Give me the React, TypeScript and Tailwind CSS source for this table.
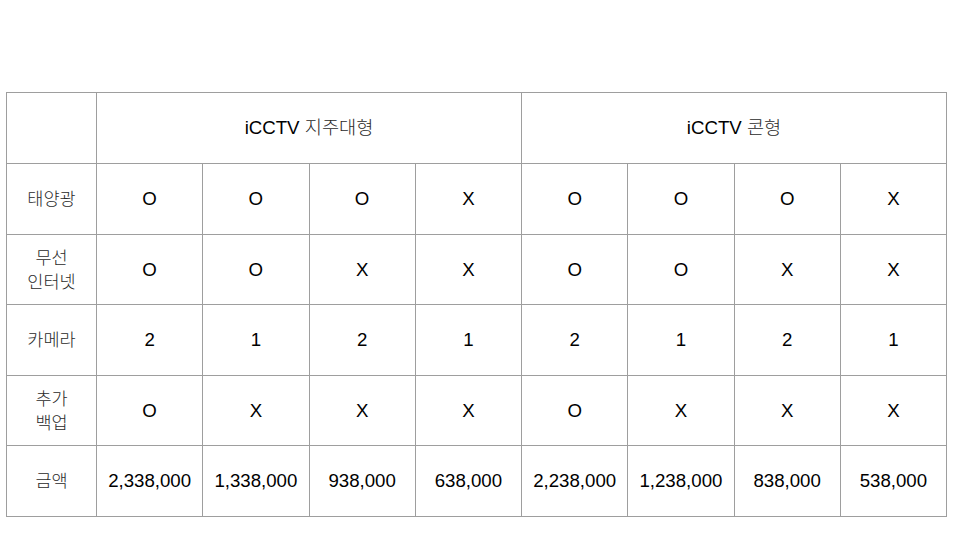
import React from 'react';

const rows: { label: string[]; values: string[] }[] = [
    { label: ['태양광'], values: ['O', 'O', 'O', 'X', 'O', 'O', 'O', 'X'] },
    { label: ['무선', '인터넷'], values: ['O', 'O', 'X', 'X', 'O', 'O', 'X', 'X'] },
    { label: ['카메라'], values: ['2', '1', '2', '1', '2', '1', '2', '1'] },
    { label: ['추가', '백업'], values: ['O', 'X', 'X', 'X', 'O', 'X', 'X', 'X'] },
    {
        label: ['금액'],
        values: ['2,338,000', '1,338,000', '938,000', '638,000', '2,238,000', '1,238,000', '838,000', '538,000'],
    },
];

const cell = 'border border-[#9e9e9e] text-center align-middle p-0';
// Korean glyphs are drawn thin and slightly gray in the reference
const ko = 'font-light text-[#2a2a2a]';

export default function App() {
    return (
        <div
            className="w-[960px] h-[540px] bg-white pt-[92px] pl-[6px] text-[18.67px] leading-[24px] text-black"
            style={{ fontFamily: '"Liberation Sans", "Noto Sans CJK KR", sans-serif' }}
        >
            <table className="border-collapse table-fixed w-[940px]">
                <colgroup>
                    <col className="w-[90px]" />
                    {Array.from({ length: 8 }).map((_, i) => (
                        <col key={i} className="w-[106.25px]" />
                    ))}
                </colgroup>
                <tbody>
                    <tr className="h-[71px]">
                        <td className={cell}></td>
                        <td className={cell} colSpan={4}>
                            iCCTV <span className={ko}>지주대형</span>
                        </td>
                        <td className={cell} colSpan={4}>
                            iCCTV <span className={ko}>콘형</span>
                        </td>
                    </tr>
                    {rows.map((row, r) => (
                        <tr key={r} className={r % 2 === 0 ? 'h-[71px]' : 'h-[70px]'}>
                            <td className={`${cell} ${ko} text-[17.5px]`}>
                                {row.label.map((l, i) => (
                                    <div key={i}>{l}</div>
                                ))}
                            </td>
                            {row.values.map((v, i) => (
                                <td key={i} className={cell}>
                                    {v}
                                </td>
                            ))}
                        </tr>
                    ))}
                </tbody>
            </table>
        </div>
    );
}
